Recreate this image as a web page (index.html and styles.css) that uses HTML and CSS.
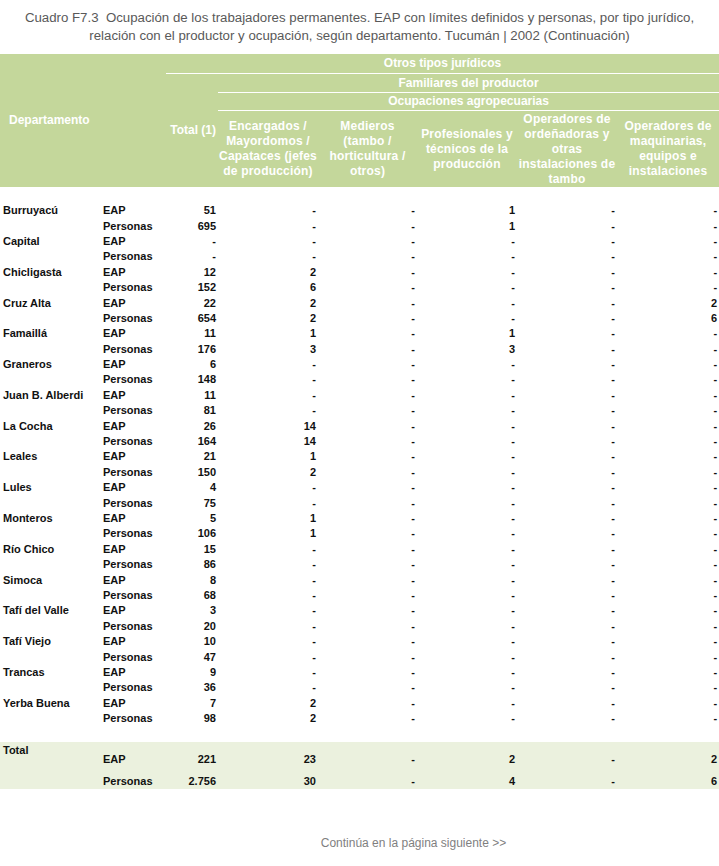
FILE: index.html
```html
<!DOCTYPE html>
<html lang="es">
<head>
<meta charset="utf-8">
<title>Cuadro F7.3</title>
<link rel="stylesheet" href="styles.css">
</head>
<body>
<div class="page">
  <h1 class="title">Cuadro F7.3&nbsp; Ocupación de los trabajadores permanentes. EAP con límites definidos y personas, por tipo jurídico,<br>relación con el productor y ocupación, según departamento. Tucumán | 2002 (Continuación)</h1>
  <table class="grid">
    <colgroup>
      <col class="c-dep"><col class="c-lab"><col class="c-tot"><col class="c-enc"><col class="c-med"><col class="c-pro"><col class="c-ope"><col class="c-maq">
    </colgroup>
    <thead>
      <tr class="h1">
        <th class="dep-h" colspan="2" rowspan="4">Departamento</th>
        <th class="span" colspan="6">Otros tipos jurídicos</th>
      </tr>
      <tr class="h2">
        <th class="tot-h" rowspan="3">Total (1)</th>
        <th class="span" colspan="5">Familiares del productor</th>
      </tr>
      <tr class="h3">
        <th class="span" colspan="5">Ocupaciones agropecuarias</th>
      </tr>
      <tr class="h4">
        <th>Encargados / Mayordomos / Capataces (jefes de producción)</th>
        <th>Medieros<br>(tambo /<br>horticultura /<br>otros)</th>
        <th>Profesionales y técnicos de la producción</th>
        <th>Operadores de ordeñadoras y otras instalaciones de tambo</th>
        <th>Operadores de maquinarias, equipos e instalaciones</th>
      </tr>
    </thead>
    <tbody>
      <tr class="gap"><td colspan="8"></td></tr>
      <tr><td class="dep">Burruyacú</td><td class="lab">EAP</td><td>51</td><td>-</td><td>-</td><td>1</td><td>-</td><td>-</td></tr>
      <tr><td class="dep"></td><td class="lab">Personas</td><td>695</td><td>-</td><td>-</td><td>1</td><td>-</td><td>-</td></tr>
      <tr><td class="dep">Capital</td><td class="lab">EAP</td><td>-</td><td>-</td><td>-</td><td>-</td><td>-</td><td>-</td></tr>
      <tr><td class="dep"></td><td class="lab">Personas</td><td>-</td><td>-</td><td>-</td><td>-</td><td>-</td><td>-</td></tr>
      <tr><td class="dep">Chicligasta</td><td class="lab">EAP</td><td>12</td><td>2</td><td>-</td><td>-</td><td>-</td><td>-</td></tr>
      <tr><td class="dep"></td><td class="lab">Personas</td><td>152</td><td>6</td><td>-</td><td>-</td><td>-</td><td>-</td></tr>
      <tr><td class="dep">Cruz Alta</td><td class="lab">EAP</td><td>22</td><td>2</td><td>-</td><td>-</td><td>-</td><td>2</td></tr>
      <tr><td class="dep"></td><td class="lab">Personas</td><td>654</td><td>2</td><td>-</td><td>-</td><td>-</td><td>6</td></tr>
      <tr><td class="dep">Famaillá</td><td class="lab">EAP</td><td>11</td><td>1</td><td>-</td><td>1</td><td>-</td><td>-</td></tr>
      <tr><td class="dep"></td><td class="lab">Personas</td><td>176</td><td>3</td><td>-</td><td>3</td><td>-</td><td>-</td></tr>
      <tr><td class="dep">Graneros</td><td class="lab">EAP</td><td>6</td><td>-</td><td>-</td><td>-</td><td>-</td><td>-</td></tr>
      <tr><td class="dep"></td><td class="lab">Personas</td><td>148</td><td>-</td><td>-</td><td>-</td><td>-</td><td>-</td></tr>
      <tr><td class="dep">Juan B. Alberdi</td><td class="lab">EAP</td><td>11</td><td>-</td><td>-</td><td>-</td><td>-</td><td>-</td></tr>
      <tr><td class="dep"></td><td class="lab">Personas</td><td>81</td><td>-</td><td>-</td><td>-</td><td>-</td><td>-</td></tr>
      <tr><td class="dep">La Cocha</td><td class="lab">EAP</td><td>26</td><td>14</td><td>-</td><td>-</td><td>-</td><td>-</td></tr>
      <tr><td class="dep"></td><td class="lab">Personas</td><td>164</td><td>14</td><td>-</td><td>-</td><td>-</td><td>-</td></tr>
      <tr><td class="dep">Leales</td><td class="lab">EAP</td><td>21</td><td>1</td><td>-</td><td>-</td><td>-</td><td>-</td></tr>
      <tr><td class="dep"></td><td class="lab">Personas</td><td>150</td><td>2</td><td>-</td><td>-</td><td>-</td><td>-</td></tr>
      <tr><td class="dep">Lules</td><td class="lab">EAP</td><td>4</td><td>-</td><td>-</td><td>-</td><td>-</td><td>-</td></tr>
      <tr><td class="dep"></td><td class="lab">Personas</td><td>75</td><td>-</td><td>-</td><td>-</td><td>-</td><td>-</td></tr>
      <tr><td class="dep">Monteros</td><td class="lab">EAP</td><td>5</td><td>1</td><td>-</td><td>-</td><td>-</td><td>-</td></tr>
      <tr><td class="dep"></td><td class="lab">Personas</td><td>106</td><td>1</td><td>-</td><td>-</td><td>-</td><td>-</td></tr>
      <tr><td class="dep">Río Chico</td><td class="lab">EAP</td><td>15</td><td>-</td><td>-</td><td>-</td><td>-</td><td>-</td></tr>
      <tr><td class="dep"></td><td class="lab">Personas</td><td>86</td><td>-</td><td>-</td><td>-</td><td>-</td><td>-</td></tr>
      <tr><td class="dep">Simoca</td><td class="lab">EAP</td><td>8</td><td>-</td><td>-</td><td>-</td><td>-</td><td>-</td></tr>
      <tr><td class="dep"></td><td class="lab">Personas</td><td>68</td><td>-</td><td>-</td><td>-</td><td>-</td><td>-</td></tr>
      <tr><td class="dep">Tafí del Valle</td><td class="lab">EAP</td><td>3</td><td>-</td><td>-</td><td>-</td><td>-</td><td>-</td></tr>
      <tr><td class="dep"></td><td class="lab">Personas</td><td>20</td><td>-</td><td>-</td><td>-</td><td>-</td><td>-</td></tr>
      <tr><td class="dep">Tafí Viejo</td><td class="lab">EAP</td><td>10</td><td>-</td><td>-</td><td>-</td><td>-</td><td>-</td></tr>
      <tr><td class="dep"></td><td class="lab">Personas</td><td>47</td><td>-</td><td>-</td><td>-</td><td>-</td><td>-</td></tr>
      <tr><td class="dep">Trancas</td><td class="lab">EAP</td><td>9</td><td>-</td><td>-</td><td>-</td><td>-</td><td>-</td></tr>
      <tr><td class="dep"></td><td class="lab">Personas</td><td>36</td><td>-</td><td>-</td><td>-</td><td>-</td><td>-</td></tr>
      <tr><td class="dep">Yerba Buena</td><td class="lab">EAP</td><td>7</td><td>2</td><td>-</td><td>-</td><td>-</td><td>-</td></tr>
      <tr><td class="dep"></td><td class="lab">Personas</td><td>98</td><td>2</td><td>-</td><td>-</td><td>-</td><td>-</td></tr>
      <tr class="gap2"><td colspan="8"></td></tr>
    </tbody>
    <tbody class="totals">
      <tr class="t1"><td class="dep tdep" rowspan="2">Total</td><td class="lab">EAP</td><td>221</td><td>23</td><td>-</td><td>2</td><td>-</td><td>2</td></tr>
      <tr class="t2"><td class="lab">Personas</td><td>2.756</td><td>30</td><td>-</td><td>4</td><td>-</td><td>6</td></tr>
    </tbody>
  </table>
  <p class="next">Continúa en la página siguiente &gt;&gt;</p>
</div>
</body>
</html>
```
FILE: styles.css
```css
html, body {
  margin: 0;
  padding: 0;
  background: #ffffff;
}
body {
  font-family: "Liberation Sans", Arial, sans-serif;
}
.page {
  width: 719px;
}
.title {
  margin: 0;
  padding: 9px 0 9px;
  font-size: 13.25px;
  line-height: 18px;
  font-weight: normal;
  color: #595959;
  text-align: center;
}
.grid {
  width: 719px;
  table-layout: fixed;
  border-collapse: separate;
  border-spacing: 0;
  font-size: 11px;
  font-weight: bold;
  color: #111111;
}
.c-dep { width: 100px; }
.c-lab { width: 66px; }
.c-tot { width: 52px; }
.c-enc { width: 100px; }
.c-med { width: 99px; }
.c-pro { width: 100px; }
.c-ope { width: 100px; }
.c-maq { width: 102px; }

.grid thead th {
  background: #c4d79b;
  color: #ffffff;
  font-size: 12px;
  font-weight: bold;
  line-height: 15px;
  padding: 0;
  text-align: center;
  vertical-align: middle;
}
.grid thead .span {
  border-bottom: 1px solid #ffffff;
}
.h1 th.span { height: 19px; }
.h2 th.span { height: 18px; }
.h3 th { height: 17px; }
.h4 th { height: 76px; padding: 0 2px; letter-spacing: 0.2px; }
.grid thead th.dep-h {
  text-align: left;
  padding-left: 9px;
}
.grid thead th.tot-h {
  text-align: right;
  padding-right: 2px;
}

.grid tbody td {
  height: 15.4px;
  padding: 0 2px 0 0;
  line-height: 13px;
  text-align: right;
  vertical-align: middle;
  white-space: nowrap;
}
.grid tbody td.dep {
  text-align: left;
  padding-left: 3px;
}
.grid tbody td.lab {
  text-align: left;
  padding-left: 3px;
}
.grid tbody .gap td { height: 16px; }
.grid tbody .gap2 td { height: 16px; }

.totals td {
  background: #ebf1de;
}
.grid .totals .t1 td {
  height: 24px;
  vertical-align: bottom;
  padding-bottom: 5px;
}
.grid .totals .t2 td {
  height: 17px;
  vertical-align: bottom;
  padding-bottom: 1px;
}
.grid .totals td.tdep {
  vertical-align: top;
  padding-top: 2px;
  padding-bottom: 0;
}
.next {
  margin: 47px 0 0;
  padding-left: 108px;
  font-size: 12px;
  color: #7f7f7f;
  text-align: center;
}
```
